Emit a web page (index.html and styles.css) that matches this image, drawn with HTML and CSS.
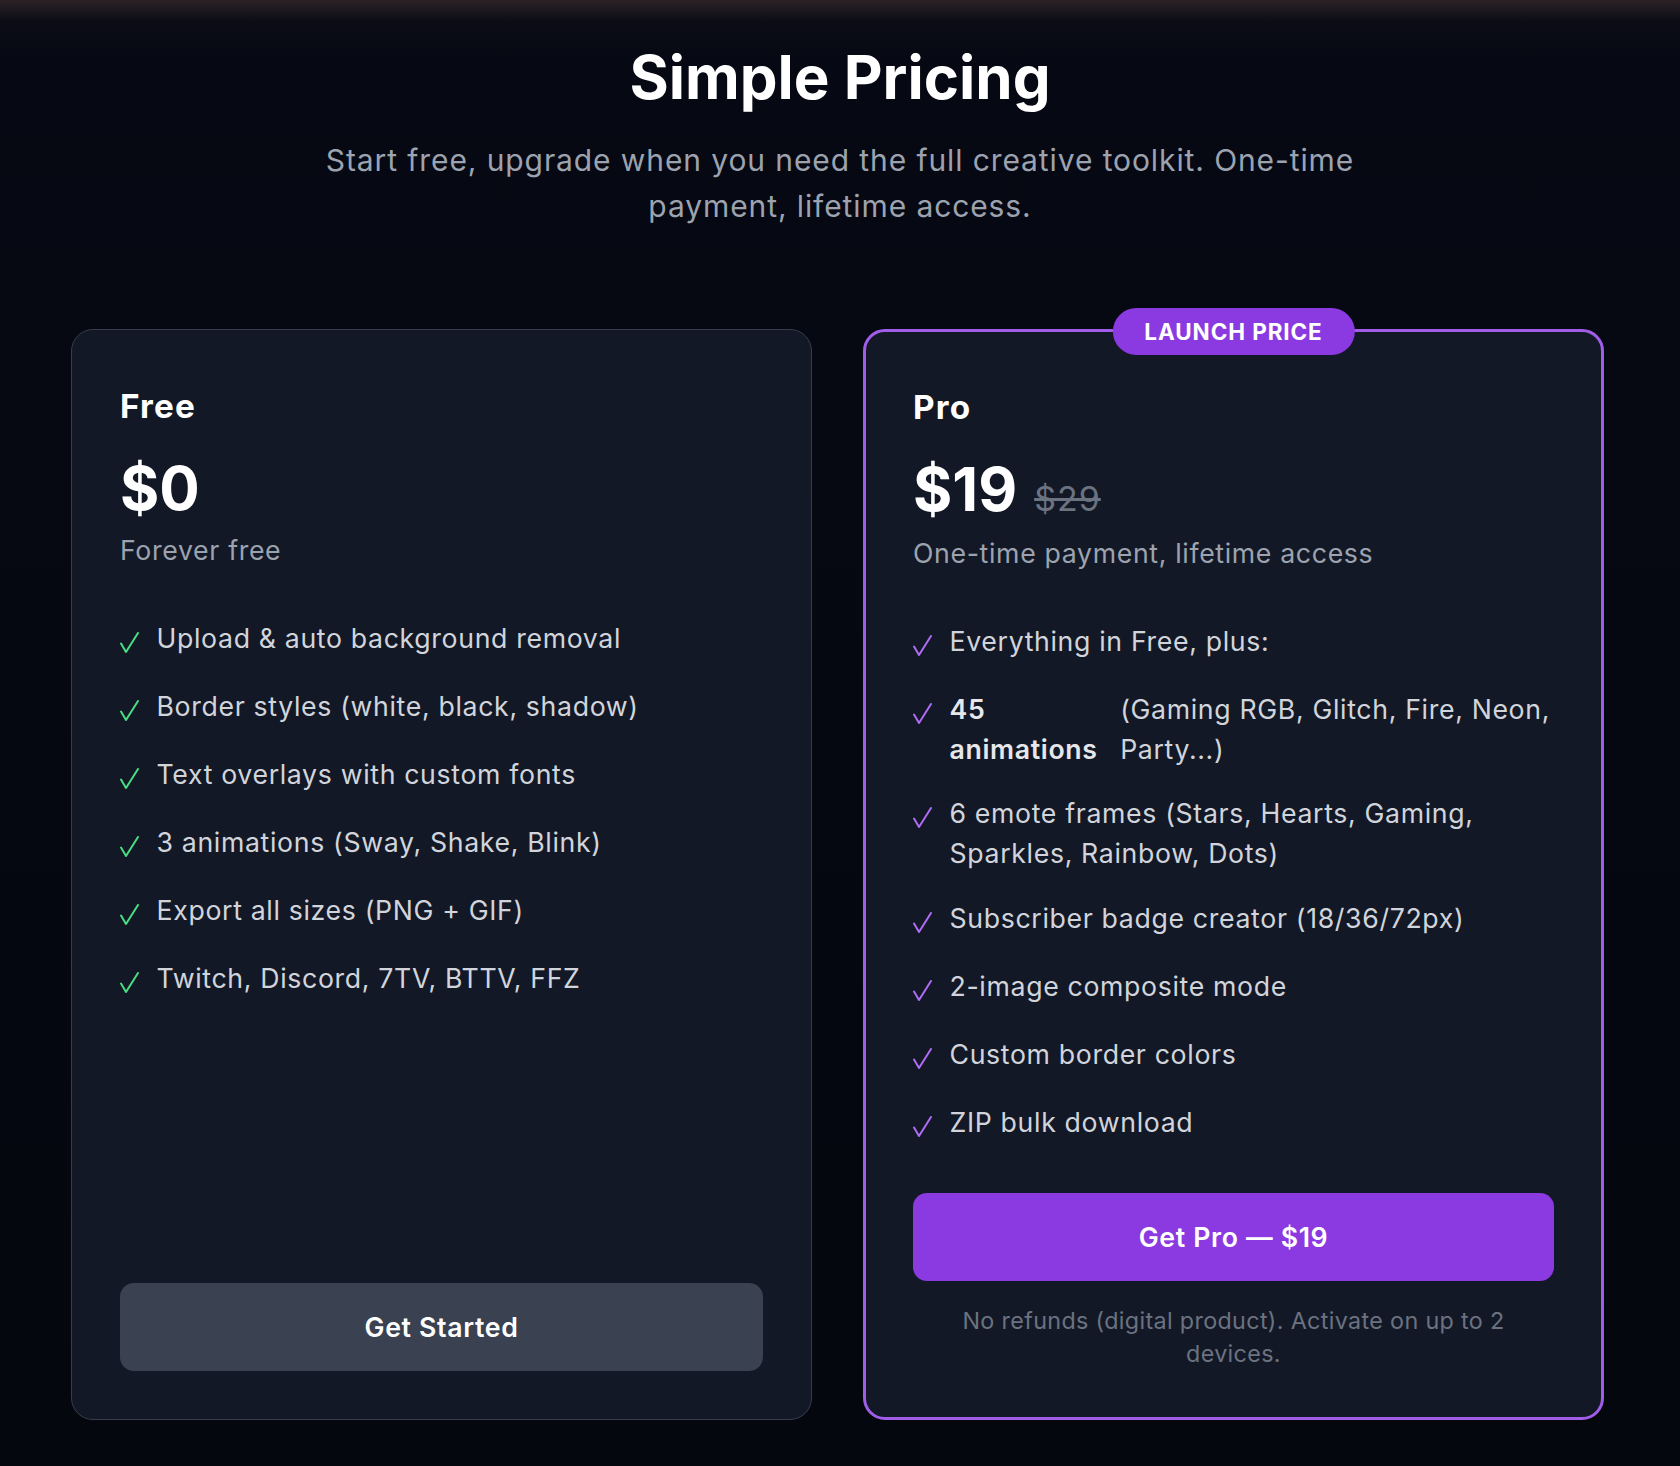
FILE: index.html
```html
<!DOCTYPE html>
<html lang="en">
<head>
<meta charset="utf-8">
<title>Simple Pricing</title>
<link rel="stylesheet" href="styles.css">
</head>
<body>
<section class="pricing">
  <h2 class="pricing-title">Simple Pricing</h2>
  <p class="pricing-subtitle">Start free, upgrade when you need the full creative toolkit. One-time payment, lifetime access.</p>

  <div class="plans">
    <div class="card">
      <h3 class="plan-name">Free</h3>
      <div class="price-row"><span class="price">$0</span></div>
      <p class="plan-desc">Forever free</p>
      <ul class="features">
        <li><svg class="check check-green" viewBox="0 0 19 21"><path d="M1 11.5 L6 20 L18 1"/></svg>Upload &amp; auto background removal</li>
        <li><svg class="check check-green" viewBox="0 0 19 21"><path d="M1 11.5 L6 20 L18 1"/></svg>Border styles (white, black, shadow)</li>
        <li><svg class="check check-green" viewBox="0 0 19 21"><path d="M1 11.5 L6 20 L18 1"/></svg>Text overlays with custom fonts</li>
        <li><svg class="check check-green" viewBox="0 0 19 21"><path d="M1 11.5 L6 20 L18 1"/></svg>3 animations (Sway, Shake, Blink)</li>
        <li><svg class="check check-green" viewBox="0 0 19 21"><path d="M1 11.5 L6 20 L18 1"/></svg>Export all sizes (PNG + GIF)</li>
        <li><svg class="check check-green" viewBox="0 0 19 21"><path d="M1 11.5 L6 20 L18 1"/></svg>Twitch, Discord, 7TV, BTTV, FFZ</li>
      </ul>
      <button class="btn btn-secondary">Get Started</button>
    </div>

    <div class="card card-pro">
      <span class="badge">LAUNCH PRICE</span>
      <h3 class="plan-name">Pro</h3>
      <div class="price-row"><span class="price">$19</span><span class="price-old">$29</span></div>
      <p class="plan-desc">One-time payment, lifetime access</p>
      <ul class="features">
        <li><svg class="check check-purple" viewBox="0 0 19 21"><path d="M1 11.5 L6 20 L18 1"/></svg>Everything in Free, plus:</li>
        <li><svg class="check check-purple" viewBox="0 0 19 21"><path d="M1 11.5 L6 20 L18 1"/></svg><strong>45 animations</strong>(Gaming RGB, Glitch, Fire, Neon, Party...)</li>
        <li><svg class="check check-purple" viewBox="0 0 19 21"><path d="M1 11.5 L6 20 L18 1"/></svg>6 emote frames (Stars, Hearts, Gaming, Sparkles, Rainbow, Dots)</li>
        <li><svg class="check check-purple" viewBox="0 0 19 21"><path d="M1 11.5 L6 20 L18 1"/></svg>Subscriber badge creator (18/36/72px)</li>
        <li><svg class="check check-purple" viewBox="0 0 19 21"><path d="M1 11.5 L6 20 L18 1"/></svg>2-image composite mode</li>
        <li><svg class="check check-purple" viewBox="0 0 19 21"><path d="M1 11.5 L6 20 L18 1"/></svg>Custom border colors</li>
        <li><svg class="check check-purple" viewBox="0 0 19 21"><path d="M1 11.5 L6 20 L18 1"/></svg>ZIP bulk download</li>
      </ul>
      <button class="btn btn-primary">Get Pro — $19</button>
      <p class="note">No refunds (digital product). Activate on up to 2 devices.</p>
    </div>
  </div>
</section>
</body>
</html>
```

FILE: styles.css
```css
* {
  box-sizing: border-box;
}

html, body {
  margin: 0;
  padding: 0;
}

body {
  min-height: 1466px;
  font-family: Inter, "Noto Sans", "Liberation Sans", sans-serif;
  color: #d1d5db;
  background: linear-gradient(to bottom, #2b2226 0px, #0b0c16 22px, #060813 60px, #05070f 100%);
}

.pricing {
  padding: 44px 0 40px;
}

.pricing-title {
  margin: 0;
  text-align: center;
  font-size: 60px;
  line-height: 66.7px;
  font-weight: 700;
  color: #ffffff;
}

.pricing-subtitle {
  margin: 26px auto 0;
  max-width: 1120px;
  text-align: center;
  font-size: 30px;
  line-height: 46.7px;
  letter-spacing: 0.9px;
  color: #9ca3af;
}

.plans {
  margin: 99px 76px 0 71px;
  display: grid;
  grid-template-columns: 1fr 1fr;
  gap: 51px;
  align-items: stretch;
}

.card {
  position: relative;
  display: flex;
  flex-direction: column;
  background: #131826;
  border: 1px solid #373d4b;
  border-radius: 22px;
  padding: 53px 48px 48px;
}

.card-pro {
  border: 3px solid #a05de8;
  padding: 52px 47px 47px;
}

.badge {
  position: absolute;
  top: -24px;
  left: 50%;
  transform: translateX(-50%);
  background: #8a3ae0;
  color: #ffffff;
  font-size: 22.5px;
  line-height: 33px;
  font-weight: 700;
  letter-spacing: 0.9px;
  padding: 7px 32px;
  border-radius: 999px;
  white-space: nowrap;
}

.plan-name {
  margin: 0;
  font-size: 33.3px;
  line-height: 46.7px;
  font-weight: 700;
  letter-spacing: 1.2px;
  color: #ffffff;
}

.price-row {
  margin-top: 25px;
  display: flex;
  align-items: baseline;
  gap: 17px;
}

.price {
  font-size: 60px;
  line-height: 66.7px;
  font-weight: 700;
  color: #ffffff;
}

.price-old {
  font-size: 34px;
  line-height: 46px;
  letter-spacing: 1px;
  color: #6b7280;
  text-decoration: line-through;
}

.plan-desc {
  margin: 8px 0 0;
  font-size: 26.7px;
  line-height: 40px;
  letter-spacing: 0.65px;
  color: #9ca3af;
}

.card-pro .plan-desc {
  margin-top: 10px;
}

.features {
  list-style: none;
  margin: 48px 0 0;
  padding: 0;
  display: flex;
  flex-direction: column;
  gap: 24.5px;
}

.features li {
  display: flex;
  align-items: flex-start;
  gap: 17.5px;
  font-size: 26.7px;
  line-height: 40px;
  letter-spacing: 0.65px;
  color: #d1d5db;
}

.features strong {
  font-weight: 600;
  color: #e5e7eb;
}

.check {
  flex-shrink: 0;
  width: 19px;
  height: 21px;
  margin: 14px 0 8.5px;
  fill: none;
  stroke-width: 2;
  stroke-linecap: round;
  stroke-linejoin: round;
}

.check-green {
  stroke: #4ade80;
}

.check-purple {
  stroke: #b06cf4;
}

.btn {
  display: block;
  width: 100%;
  border: 0;
  border-radius: 14px;
  padding: 24px 16px;
  font-family: inherit;
  font-size: 26.7px;
  line-height: 40px;
  font-weight: 600;
  letter-spacing: 0.65px;
  color: #ffffff;
  cursor: pointer;
}

.btn-secondary {
  margin-top: auto;
  background: #3a4150;
}

.btn-primary {
  margin-top: 48px;
  background: #8a3ae0;
}

.note {
  margin: 23px 40px 0;
  text-align: center;
  font-size: 23.3px;
  line-height: 33px;
  letter-spacing: 0.35px;
  color: #6b7280;
}
```
